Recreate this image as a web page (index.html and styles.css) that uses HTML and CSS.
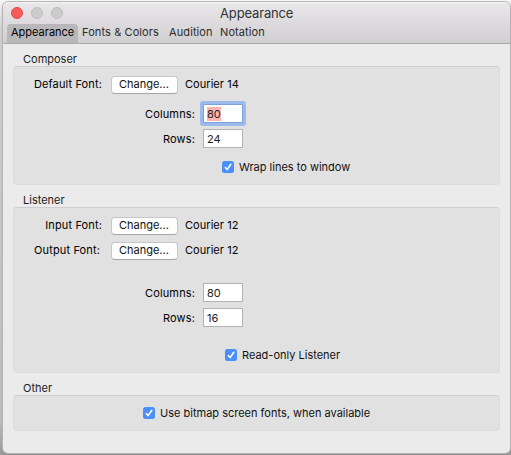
FILE: index.html
```html
<!DOCTYPE html>
<html lang="en">
<head>
<meta charset="utf-8">
<title>Appearance</title>
<link rel="stylesheet" href="styles.css">
</head>
<body>
<main class="window">
  <header class="header">
    <div class="titlebar">
      <div class="lights"><i class="light close"></i><i class="light"></i><i class="light"></i></div>
      <h1 class="title">Appearance</h1>
    </div>
    <nav class="tabs">
      <span class="tab selected">Appearance</span>
      <span class="tab fonts">Fonts &amp; Colors</span>
      <span class="tab audition">Audition</span>
      <span class="tab notation">Notation</span>
    </nav>
  </header>
  <h2 class="heading">Composer</h2>
  <section class="group composer">
    <div class="row"><span class="label">Default Font:</span><span class="button">Change...</span><span class="value">Courier 14</span></div>
    <div class="row size first"><span class="label">Columns:</span><span class="field focused"><mark>80</mark></span></div>
    <div class="row size"><span class="label">Rows:</span><span class="field">24</span></div>
    <div class="check wrap"><svg class="box" viewBox="0 0 12 12"><rect width="12" height="12" rx="2.5"/><path d="M3.3 6.5 5.1 8.6 8.8 3.3"/></svg><span>Wrap lines to window</span></div>
  </section>
  <h2 class="heading">Listener</h2>
  <section class="group listener">
    <div class="row"><span class="label">Input Font:</span><span class="button">Change...</span><span class="value">Courier 12</span></div>
    <div class="row"><span class="label output">Output Font:</span><span class="button">Change...</span><span class="value">Courier 12</span></div>
    <div class="row size first"><span class="label">Columns:</span><span class="field">80</span></div>
    <div class="row size"><span class="label">Rows:</span><span class="field">16</span></div>
    <div class="check readonly"><svg class="box" viewBox="0 0 12 12"><rect width="12" height="12" rx="2.5"/><path d="M3.3 6.5 5.1 8.6 8.8 3.3"/></svg><span>Read-only Listener</span></div>
  </section>
  <h2 class="heading">Other</h2>
  <section class="group other">
    <div class="check bitmap"><svg class="box" viewBox="0 0 12 12"><rect width="12" height="12" rx="2.5"/><path d="M3.3 6.5 5.1 8.6 8.8 3.3"/></svg><span>Use bitmap screen fonts, when available</span></div>
  </section>
</main>
</body>
</html>
```
FILE: styles.css
```css
* { box-sizing: border-box; }
body {
  margin: 0;
  height: 455px;
  padding: 2px 1px 2px 3px;
  overflow: hidden;
  background: linear-gradient(#f6f6f6, #d0d0d0 30px, #bdbdbd 420px, #999);
  font: 11px/14px Inter, "Liberation Sans", sans-serif;
  color: #111;
  white-space: nowrap;
}
.window {
  height: 451px;
  border-radius: 5px;
  background: #ebebeb;
  box-shadow: 0 0 0 1px #b5b5b5, 0 1px 2px #666;
  overflow: hidden;
}
.header {
  height: 42px;
  background: linear-gradient(#e9e7e9, #d0ced0);
  border-top: 1px solid #f5f5f5;
  border-bottom: 1px solid #a9a9a9;
}
.titlebar { display: flex; height: 21px; }
.lights { display: flex; gap: 8px; width: 217px; padding: 4px 0 0 8px; }
.light { width: 12px; height: 12px; border-radius: 50%; background: #cdcccd; border: 1px solid #bcbbbc; }
.close { background: #fc5b5e; border-color: #df484b; }
.title { margin: 2px 0 0; font-size: 13px; line-height: 16px; font-weight: 400; letter-spacing: -0.15px; color: #333; }
.tabs { display: flex; height: 19px; padding-left: 4px; color: #2b2b2b; letter-spacing: 0.1px; }
.tab { line-height: 17px; }
.selected { width: 71px; padding-left: 4px; background: #b9b7b9; border-radius: 4px 4px 0 0; color: #000; letter-spacing: 0; }
.fonts { width: 87px; padding-left: 4px; }
.audition { width: 55px; padding-left: 4px; }
.heading { margin: 0; height: 22px; padding: 8px 0 0 20px; font-size: 11px; line-height: 14px; font-weight: 400; color: #222; }
.group { margin: 0 10px; background: #e1e1e1; border: 1px solid #dcdcdc; border-top-color: #cecece; border-radius: 4px; padding-top: 5px; }
.composer { height: 119px; }
.listener { height: 166px; }
.other { height: 36px; }
.row { display: flex; align-items: center; height: 25px; }
.label { width: 88px; margin-top: -1px; text-align: right; color: #000; letter-spacing: 0.13px; }
.output { padding-right: 2px; }
.button { width: 67px; height: 18px; margin-left: 9px; padding-left: 7px; line-height: 15px; border-radius: 4px; background: #fff; border: 1px solid #c7c7c7; border-bottom-color: #a6a6a6; }
.value { margin: -1px 0 0 7px; color: #000; letter-spacing: 0.05px; }
.size .label { width: 181px; margin-top: 1px; }
.composer .first { margin-top: 4px; }
.listener .first { margin-top: 17px; }
.field { width: 40px; height: 19px; margin-left: 8px; padding-left: 3px; line-height: 18px; background: #fff; border: 1px solid #b2b2b2; color: #222; }
.focused { border-color: #7e9fd8; box-shadow: 0 0 0 3px #9dbaec; border-radius: 1px; }
mark { background: #ffb4b4; color: #222; }
.check { display: flex; align-items: center; gap: 5px; height: 14px; }
.box { width: 12px; height: 12px; }
.box rect { fill: #4b8ff8; }
.box path { fill: none; stroke: #fff; stroke-width: 1.6; stroke-linecap: round; stroke-linejoin: round; }
.wrap { margin: 9px 0 0 208px; }
.readonly { margin: 18px 0 0 211px; }
.bitmap { margin: 5px 0 0 129px; }
```
